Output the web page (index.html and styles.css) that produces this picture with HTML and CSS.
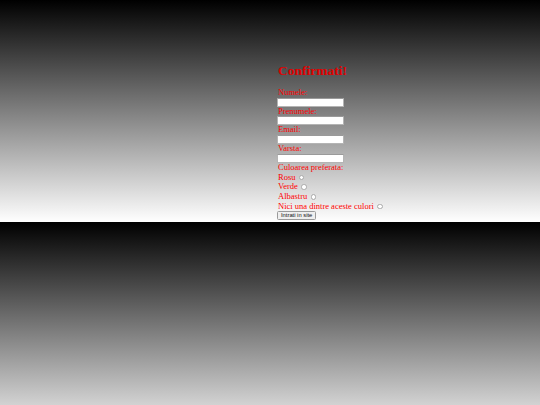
FILE: index.html
```html
<!DOCTYPE html>
<html>
<head>
<meta charset="utf-8">
<title>Confirmati</title>
<link rel="stylesheet" href="styles.css">
</head>
<body>
<div class="page">
  <form class="form">
    <h1 class="title">Confirmati!</h1>
    <label class="lbl">Numele:</label>
    <input class="field" type="text">
    <label class="lbl">Prenumele:</label>
    <input class="field" type="text">
    <label class="lbl">Email:</label>
    <input class="field" type="text">
    <label class="lbl">Varsta:</label>
    <input class="field" type="text">
    <span class="lbl">Culoarea preferata:</span>
    <label class="lbl opt">Rosu <input class="radio" type="radio" name="c"></label>
    <label class="lbl opt">Verde <input class="radio" type="radio" name="c"></label>
    <label class="lbl opt">Albastru <input class="radio" type="radio" name="c"></label>
    <label class="lbl opt">Nici una dintre aceste culori <input class="radio" type="radio" name="c"></label>
    <button class="btn" type="button">Intrati in site</button>
  </form>
</div>
</body>
</html>
```
FILE: styles.css
```css
html {
  margin: 0;
  height: 100%;
  background: linear-gradient(to bottom, #000 0%, #fff 100%);
  background-size: 100% 222px;
  background-repeat: repeat;
}
body {
  margin: 0;
  font-family: "Liberation Serif", "Times New Roman", serif;
}
.page {
  padding: 54px 0 0 277px;
}
.form {
  display: flex;
  flex-direction: column;
  align-items: flex-start;
}
.title {
  margin: 9px 0 9px 1px;
  font-size: 13.5px;
  line-height: 16px;
  font-weight: bold;
  color: #e00000;
}
.lbl {
  display: block;
  font-size: 8.5px;
  line-height: 9.7px;
  color: #f00;
  margin-left: 1px;
}
.opt {
  display: flex;
  align-items: center;
}
.field {
  box-sizing: border-box;
  width: 67px;
  height: 9px;
  margin: 0;
  padding: 0;
  border: 1px solid #b4b4b4;
  border-top-color: #9a9a9a;
  background: #fff;
  font-size: 5.6px;
}
.radio {
  appearance: none;
  -webkit-appearance: none;
  box-sizing: border-box;
  width: 5.5px;
  height: 5.5px;
  margin: 0 0 0 3.5px;
  border: 0.6px solid #aaa;
  border-radius: 50%;
  background: #fff;
}
.btn {
  box-sizing: border-box;
  height: 9px;
  margin: 0;
  padding: 0 3px;
  font-family: "Liberation Sans", Arial, sans-serif;
  font-size: 5.8px;
  line-height: 7px;
  color: #111;
  background: #efefef;
  border: 0.6px solid #9a9a9a;
  border-radius: 1.5px;
}
```
